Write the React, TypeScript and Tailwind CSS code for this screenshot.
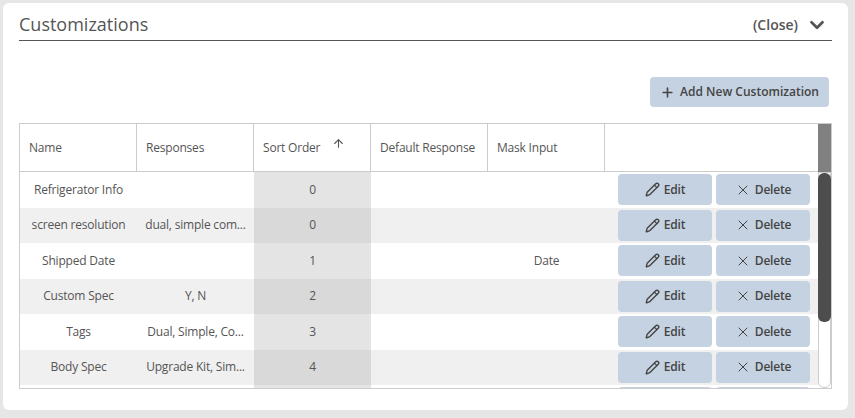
import { Pencil, X, Plus, ChevronDown, ArrowUp } from 'lucide-react';

const rows = [
    { name: 'Refrigerator Info', responses: '', sort: 0, def: '', mask: '' },
    { name: 'screen resolution', responses: 'dual, simple com...', sort: 0, def: '', mask: '' },
    { name: 'Shipped Date', responses: '', sort: 1, def: '', mask: 'Date' },
    { name: 'Custom Spec', responses: 'Y, N', sort: 2, def: '', mask: '' },
    { name: 'Tags', responses: 'Dual, Simple, Co...', sort: 3, def: '', mask: '' },
    { name: 'Body Spec', responses: 'Upgrade Kit, Sim...', sort: 4, def: '', mask: '' },
    { name: '', responses: '', sort: '', def: '', mask: '' },
];

const cols = 'grid grid-cols-[117px_117px_117px_117px_117px_1fr]';

function RowButton({ kind }: { kind: 'edit' | 'delete' }) {
    return (
        <button className="w-[94px] h-[31px] shrink-0 rounded bg-[#c5d2e1] text-[#444] text-[12px] font-semibold flex items-center justify-center gap-1">
            {kind === 'edit' ? <Pencil size={15} strokeWidth={2.2} /> : <X size={16} strokeWidth={1.5} />}
            {kind === 'edit' ? 'Edit' : 'Delete'}
        </button>
    );
}

export default function App() {
    return (
        <div className="w-[855px] h-[418px] bg-[#e6e6e6] p-[3px] pr-[7px] pb-[8px]" style={{ fontFamily: '"Open Sans", sans-serif' }}>
            <div className="h-full bg-white rounded-md px-4 pt-[6px]">
                {/* Header */}
                <div className="flex items-center justify-between border-b border-[#555] h-[32px]">
                    <span className="text-[18px] text-[#555]">Customizations</span>
                    <span className="flex items-center gap-2 text-[14px] font-semibold text-[#555] pr-1">
                        (Close) <ChevronDown size={22} strokeWidth={3} />
                    </span>
                </div>

                <div className="flex justify-end mt-[36px] pr-[3px]">
                    <button className="h-[30px] px-[10px] rounded bg-[#c5d2e1] text-[#444] text-[12px] font-semibold flex items-center gap-[5px] whitespace-nowrap">
                        <Plus size={15} strokeWidth={2.5} /> Add New Customization
                    </button>
                </div>

                {/* Table */}
                <div className="mt-[16px] border border-[#ccc] h-[266px] flex overflow-hidden">
                    <div className="flex-1 flex flex-col text-[12px] text-[#555] tracking-[-0.2px]">
                        <div className={`${cols} h-[48px] shrink-0 border-b border-[#ccc]`}>
                            {['Name', 'Responses', 'Sort Order', 'Default Response', 'Mask Input', ''].map((h, i) => (
                                <div key={i} className={`flex items-center px-[9px] whitespace-nowrap ${i < 5 ? 'border-r border-[#ccc]' : ''}`}>
                                    {h}
                                    {h === 'Sort Order' && <ArrowUp size={13} strokeWidth={2} className="ml-3 -mt-2" />}
                                </div>
                            ))}
                        </div>
                        {rows.map((r, i) => (
                            <div key={i} className={`${cols} h-[35.5px] shrink-0 ${i % 2 ? 'bg-[#f0f0f0]' : 'bg-white'}`}>
                                <div className="flex items-center justify-center whitespace-nowrap">{r.name}</div>
                                <div className="flex items-center justify-center whitespace-nowrap">{r.responses}</div>
                                <div className={`flex items-center justify-center ${i % 2 ? 'bg-[#d9d9d9]' : 'bg-[#e4e4e4]'}`}>{r.sort}</div>
                                <div className="flex items-center justify-center">{r.def}</div>
                                <div className="flex items-center justify-center">{r.mask}</div>
                                <div className="flex items-center pl-[13px] gap-[4px]">
                                    <RowButton kind="edit" />
                                    <RowButton kind="delete" />
                                </div>
                            </div>
                        ))}
                    </div>
                    {/* Scrollbar */}
                    <div className="w-[13px] flex flex-col">
                        <div className="h-[48px] bg-[#808080]" />
                        <div className="flex-1 border border-[#ccc] rounded-b-md relative">
                            <div className="absolute -left-px -right-px top-0 h-[149px] bg-[#4d4d4d] rounded-md" />
                        </div>
                    </div>
                </div>
            </div>
        </div>
    );
}
